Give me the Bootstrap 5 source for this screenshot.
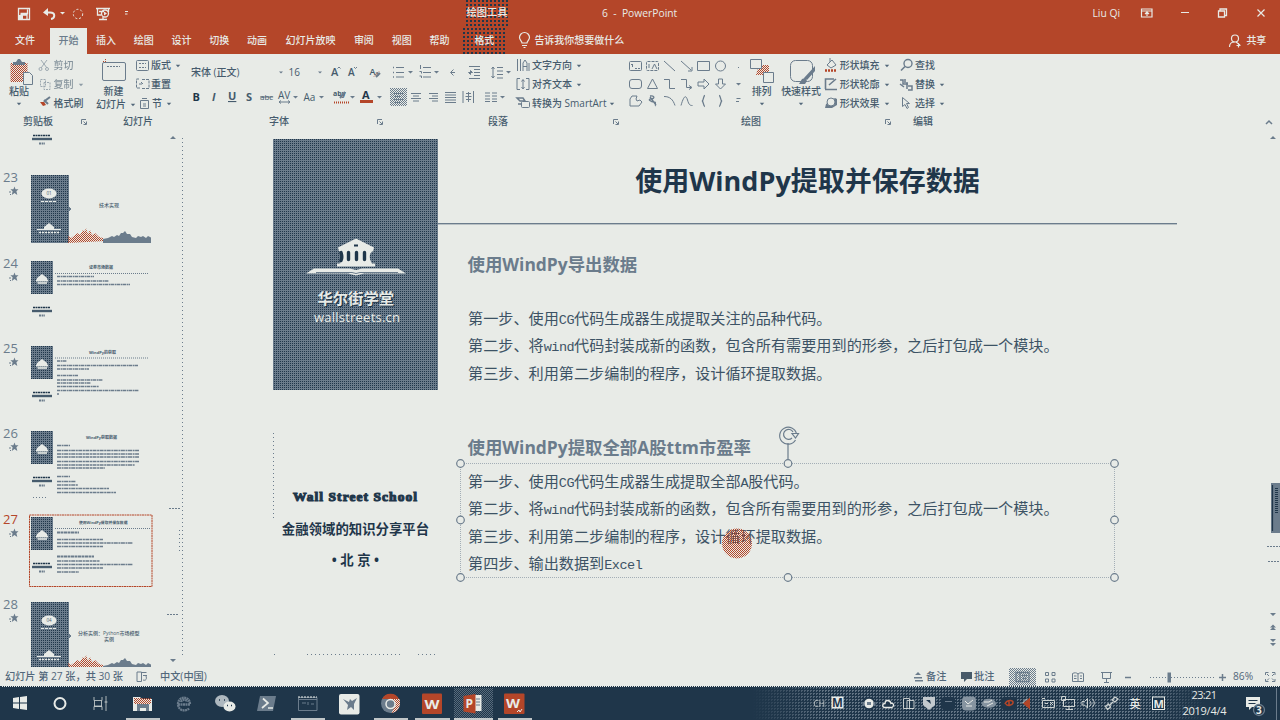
<!DOCTYPE html>
<html lang="zh-CN">
<head>
<meta charset="utf-8">
<meta name="viewport" content="width=device-width, initial-scale=1">
<title>6 - PowerPoint</title>
<link href="https://cdn.jsdelivr.net/npm/bootstrap@5.3.0/dist/css/bootstrap.min.css" rel="stylesheet">
<style>
:root{--paper:#e8ebe7;--slate:#6b7c8c;--navy:#1f364a;--brick:#b44629}
html,body{width:1280px;height:720px;overflow:hidden}
body{background:var(--paper);color:#465b6d;font:500 10px/13px "Open Sans","Noto Sans CJK SC",sans-serif}
svg{display:block;flex:none;overflow:visible;fill:none;stroke:var(--slate);stroke-width:1}
svg text{stroke:none;fill:#465b6d}
.f{fill:var(--slate);stroke:none}.fn{fill:var(--navy);stroke:none}.fr{fill:var(--brick);stroke:none}.fw{fill:var(--paper);stroke:none}
.sr{stroke:var(--brick)}.sw{stroke:var(--paper)}.sn{stroke:var(--navy)}
.hatch{background:conic-gradient(var(--navy) 25%,var(--slate) 0) 0 0/2px 2px}
.top-bar{background:var(--brick);color:var(--paper);height:54px}
.top-bar svg{stroke:var(--paper)}.top-bar svg text{fill:var(--paper)}
.line-a{height:27px;font-size:10.3px}.line-b{height:27px;padding-top:1px}
.lead-gap{width:324px}.user-name{width:388px;line-height:25px}
.doc-title{width:222px;padding-left:92px;line-height:25px;white-space:pre}
.ctx-tools{width:46px;background:conic-gradient(var(--navy) 25%,transparent 0) 0 0/4px 4px;white-space:nowrap}
.line-a .ctx-tools{line-height:25px}
.line-b>span{width:37.8px;text-align:center;line-height:25px;flex:none}
.line-b>.t-file{width:50px}.line-b>.t-on{width:37px;background:var(--paper);color:var(--slate)}
.line-b>.t-show{width:69px}.line-b>.t-fmt{width:46px;margin-left:3px}.line-b>.t-tell{width:92px}
.ribbon-x{height:77px}
.grp-body{height:58px}
.grp-foot{height:19px;line-height:19px;text-align:center}
.g1{width:92px}.g2{width:92px}.g3{width:202px}.g4{width:236px}.g5{width:274px}.g6{width:54px}
.foot1{width:76px}.foot3{width:190px}.foot4{width:224px}.foot5{width:258px}
.font-name{width:93px;padding-left:7px;line-height:24px}
.w-paste{width:38px}.w-new{width:43px}.w-arr{width:36px}
.rows3{padding-top:2px}
.rows3>div{height:19px;display:flex;align-items:center;white-space:nowrap}
.big-btn{text-align:center}
.faint{opacity:.6}
.shape-grid{display:grid;grid-template-columns:repeat(6,17.2px);grid-auto-rows:17.7px;padding:3px 0 0 4.5px}
.work{height:536px}
.thumbs{width:184px;overflow:hidden}
.num{width:31px;font-size:13px;line-height:15px;padding-left:3px;color:var(--slate)}
.num span{display:block;margin-top:-5px;height:16px}
.num svg{margin-left:6px}
.thumb-row{height:85.4px;flex:none}
.slide-left{width:165px;margin-left:89px;padding-top:8px}
.brand{height:251px}
.school{text-align:center;color:var(--navy);font-size:13.4px;font-weight:700;white-space:nowrap}
.school>div{height:31.6px;line-height:32px}
.school .wss{font-family:"Liberation Serif",serif;font-size:13.5px;-webkit-text-stroke:1.1px var(--navy);letter-spacing:1.05px}
.slide-right{width:739px;padding-top:8px}
.s-title{height:84px;line-height:84px;font-size:27px;font-weight:700;color:var(--navy);text-align:center}
.s-rule{height:1px;background:var(--slate);box-shadow:0 1px 0 #b9c1c4}
.s-h{padding-left:29.5px;font-size:17.4px;font-weight:700;color:var(--slate);white-space:nowrap}
.h-one{line-height:81px;height:79.8px}.h-two{padding-top:45px;height:77.2px;line-height:32px}
.s-text{padding-left:30px;font:400 15.15px/27.4px "Noto Sans CJK SC",sans-serif;color:#3d5365;white-space:nowrap}
.s-text i{font:400 13.5px/20px "Liberation Mono",monospace;letter-spacing:-.5px}
.boxed{margin-left:22px;padding:2.8px 0 0 7px;width:655px;height:115px;border:1px dotted #a3aeb6;position:relative}
.over{position:absolute;left:-8px;top:-38px;pointer-events:none}
.status-x{height:20px;border-bottom:1px dotted var(--navy);color:#52677a;font-size:10.2px}
.st-page{width:133px;padding-left:5px;white-space:nowrap}.st-lang{width:751px}.st-note{width:33px}.st-cmt{width:30px}.st-zoom{width:30px;padding-left:1px}
.task-x{height:33px;background:var(--navy);color:var(--paper)}
.task-x svg text{fill:var(--paper)}
.tray{width:528px;position:relative}
.tray:before{content:"";position:absolute;inset:0;background:conic-gradient(#627484 25%,transparent 0) 0 0/3px 3px;-webkit-mask-image:linear-gradient(90deg,transparent,#000 14%,#000 76%,transparent 86%)}
.tray>*{position:relative}
</style>
</head>
<body>
<svg width="0" height="0" class="position-absolute">
 <defs>
  <pattern id="pd" width="2" height="2" patternUnits="userSpaceOnUse"><rect width="2" height="2" fill="#6b7c8c" stroke="none"/><rect width="1" height="1" fill="#1f364a" stroke="none"/></pattern>
  <pattern id="pr" width="2" height="2" patternUnits="userSpaceOnUse"><rect width="1" height="1" fill="#b44629" stroke="none"/><rect x="1" y="1" width="1" height="1" fill="#b44629" stroke="none"/></pattern>
  <pattern id="ps" width="2" height="2" patternUnits="userSpaceOnUse"><rect width="1" height="1" fill="#6b7c8c" stroke="none"/><rect x="1" y="1" width="1" height="1" fill="#6b7c8c" stroke="none"/></pattern>
  <symbol id="car" viewBox="0 0 6 4"><path d="M.8 .8h4.4L3 3.2z" fill="#52677a" stroke="none"/></symbol>
  <symbol id="launch" viewBox="0 0 8 8"><path d="M1.5 6V1.5H6M3.5 3.5L6 6M3.5 6.5h3v-3" stroke="#6b7c8c"/></symbol>
  <symbol id="star" viewBox="0 0 10 10"><path d="M5.5 .5L6.5 3.3h3L7.4 5.2 8.3 9 5.5 7 2.8 9l.8-3.8L1.4 3.3h3z" fill="#6b7c8c" stroke="none"/><path d="M0 6h2M1 8.5h1" stroke="#6b7c8c"/></symbol>
  <symbol id="bank" viewBox="0 0 100 38"><path d="M50 0L68 9l-1 4h-1c-3 3-3 7 0 12h3v3H31v-3h3c3-5 3-9 0-12h-1l-1-4z" fill="#e8ebe7" stroke="none"/><path d="M35 14c1 3 1 6 0 8M42.500 14v7M50.500 14v7M58.500 14v7" stroke="#1f364a" stroke-width="3.400" stroke-linecap="round"/><path d="M48 7h4" stroke="#1f364a" stroke-width="2"/><path d="M8 30h36l6 1.600 6-1.600h36l8 5H58l-8 2-8-2H0z" fill="#e8ebe7" stroke="none"/><path d="M10 34h36l4 1 4-1h38" stroke="#6b7c8c"/></symbol>
  <symbol id="small" viewBox="0 0 22 33"><rect width="22" height="33" fill="url(#pd)" stroke="none"/><path d="M11 13l5 4v2H6v-2zM5 18.500h12v2H5z" fill="#e8ebe7" stroke="none"/><path d="M6.500 22h9.500" stroke="#e8ebe7" stroke-width="1.600"/></symbol>
  <symbol id="cover" viewBox="0 0 120 68"><rect width="38" height="68" fill="url(#pd)" stroke="none"/><path d="M38 32l2 2-2 2z" fill="#6b7c8c"/><ellipse cx="18" cy="18.500" rx="7.500" ry="5" fill="#e8ebe7" stroke="none"/><path d="M10 26.500h16" stroke="#e8ebe7" stroke-dasharray="3 1"/><path d="M18 48l5 4v2h7v1H6v-1h7v-2z" fill="#e8ebe7" stroke="none"/><path d="M8 57.500h20" stroke="#e8ebe7" stroke-width="1.600" stroke-dasharray="2 1"/><path d="M37 68v-7l3 2 4-3 2-2 3 2 3-5 2 1 1-3 2 6 2-4 2 5 3-2 4 4 4 1 3 3z" fill="url(#pr)" stroke="none"/><path d="M72 68v-4l5-1 2-1 2-1 2 1 3-2 2 1 2-3 2 0 2-2 2 3 3 0 2 3 4 1 2-2 3 1 2-1 3 2 2-2 4 2v5z" fill="#6b7c8c" stroke="none"/></symbol>
  <symbol id="motto" viewBox="0 0 22 14"><path d="M2 1.500h17" stroke="#1f364a" stroke-width="1.600" stroke-dasharray="2 .5"/><path d="M1 5h20" stroke="#465b6d" stroke-width="2.400"/><path d="M8 9.500h6" stroke="#6b7c8c" stroke-width="2" stroke-dasharray="2 .6"/></symbol>
 </defs>
</svg>

<header class="top-bar">
 <div class="line-a d-flex align-items-center">
  <svg width="140" height="27" viewBox="0 0 140 27">
   <path d="M18.500 8.500h11v11h-11zM20.500 13.500h7v-4M21 19v-4h6v4" stroke-width="1.300"/><path class="fw" d="M19 15h4v4h-4z"/>
   <path d="M45 12.500h5c6 0 5 6 1 6.500" stroke-width="2"/><path class="fw" d="M43 12.500l5-4.500v8z"/><path class="fw" d="M60 12h5l-2.500 2.500z"/>
   <circle cx="78" cy="14" r="4.700" stroke-dasharray="2 2"/>
   <path d="M96 8.500h14M97.500 9v6h4M108.500 9v3M103 17v2M99 19.500h8M99 11.500h5" stroke-width="1.300"/><circle cx="105" cy="13.500" r="3.500" stroke-width="1.300"/><path class="fw" d="M104 11.500l3 2-3 2z"/><path d="M125 11.500h3M125 14h2.500"/>
  </svg>
  <div class="lead-gap"></div>
  <div class="ctx-tools h-100 text-center">绘图工具</div>
  <div class="doc-title">6  -  PowerPoint</div>
  <div class="user-name text-end">Liu Qi</div>
  <svg width="160" height="27" viewBox="1120 0 160 27">
   <path d="M1141.500 9h10.500v8h-10.500zM1141.500 11h10.500M1147 16v-4M1145 14l2-2 2 2" stroke-width="1.200"/><path d="M1181 12.500h8"/><path d="M1218.500 11h6v6h-6zM1220 10.500V9h6.500v6.500H1225" stroke-width="1.300"/><path d="M1257.500 9.500l7 7M1264.500 9.500l-7 7" stroke-width="1.200"/>
  </svg>
 </div>
 <nav class="line-b d-flex">
  <span class="t-file">文件</span><span class="t-on">开始</span><span>插入</span><span>绘图</span><span>设计</span><span>切换</span><span>动画</span><span class="t-show">幻灯片放映</span><span>审阅</span><span>视图</span><span>帮助</span><span class="t-fmt ctx-tools">格式</span>
  <svg width="26" height="26" viewBox="507 27 26 26"><path d="M522 42c0-2-2.500-3-2.500-5.500a5 5 0 0 1 10 0c0 2.500-2.500 3.500-2.500 5.500zM522 44.500h5M523.500 46.500h2" stroke-width="1.200"/></svg>
  <span class="t-tell">告诉我你想要做什么</span>
  <svg width="617" height="26" viewBox="622 28 617 26"><circle cx="1232" cy="38.500" r="3.500" stroke-width="1.200"/><path d="M1226.500 47c0-3 2-5 5-5M1233 42l4 3M1235.500 43v4.500M1233.500 45.500h4" stroke-width="1.200"/></svg>
  <span class="text-start ps-1">共享</span>
 </nav>
</header>

<section class="ribbon-x d-flex">
 <div class="g1">
  <div class="grp-body d-flex">
   <div class="big-btn w-paste">
    <svg width="38" height="31" viewBox="0 54 38 31"><path d="M10.500 63h17v19h-17z" fill="url(#pr)" stroke="none"/><path class="f" d="M13 65v-3h3l2-3h2l2 3h3v3z"/><path d="M23.500 72.500h6l3 3v9h-9z" fill="#e8ebe7"/></svg>
    粘贴<svg class="mx-auto mt-1" width="6" height="4"><use href="#car"/></svg>
   </div>
   <div class="rows3">
    <div class="faint"><svg width="15.500" height="19" viewBox="38 56 15.500 19"><path d="M41 60l6 8M47 60l-6 8"/><circle cx="40.500" cy="69" r="1.500"/><circle cx="47" cy="69" r="1.500"/></svg>剪切</div>
    <div class="faint"><svg width="15.500" height="19" viewBox="38 75 15.500 19"><path d="M40.500 79.500h5v7h-5zM44 82.500h6v7h-6z" stroke-dasharray="2 1"/></svg>复制<svg class="ms-1" width="6" height="4"><use href="#car"/></svg></div>
    <div><svg width="15.500" height="19" viewBox="38 94 15.500 19"><path d="M44 102l2-2 4-3M44 100l4 4" stroke-width="2"/><path class="fr" d="M40 102h4l2 3-3 1z"/></svg>格式刷</div>
   </div>
  </div>
  <div class="grp-foot d-flex align-items-center"><div class="foot1">剪贴板</div><svg class="ms-1" width="8" height="8"><use href="#launch"/></svg></div>
 </div>

 <div class="g2">
  <div class="grp-body d-flex">
   <div class="big-btn w-new">
    <svg width="43" height="31" viewBox="92 54 43 31"><rect x="102.500" y="62.500" width="23" height="18" rx="1.500"/><path d="M107 66.500h13" stroke-dasharray="2 1"/><path class="sr" d="M103 61.500h3M105.500 59v2" stroke-dasharray="1 1"/></svg>
    <div>新建</div><div class="d-flex align-items-center ps-1 text-nowrap">幻灯片<svg class="ms-1" width="6" height="4"><use href="#car"/></svg></div>
   </div>
   <div class="rows3">
    <div><svg width="16" height="19" viewBox="135 56 16 19"><rect x="136.500" y="60.500" width="12" height="10" rx="1"/><path d="M139 63.500h7M139 67.500h7" stroke-dasharray="2 1"/></svg>版式<svg class="ms-1" width="6" height="4"><use href="#car"/></svg></div>
    <div><svg width="16" height="19" viewBox="135 75 16 19"><path d="M139 79h-2.500v9H140M142 79.500h7v9h-7M139 84h4l-2-2" stroke-dasharray="3 1"/></svg>重置</div>
    <div><svg width="17" height="19" viewBox="135 94 17 19"><path d="M140.500 100.500h8v8h-8zM142 98.500h5M143 104h3M143 106h3"/></svg>节<svg class="ms-1" width="6" height="4"><use href="#car"/></svg></div>
   </div>
  </div>
  <div class="grp-foot">幻灯片</div>
 </div>

 <div class="g3">
  <div class="grp-body">
   <div class="d-flex" style="padding-top:6px">
    <div class="font-name">宋体 (正文)</div>
    <svg width="109" height="24" viewBox="277 60 109 24"><path class="f" d="M279 71.500h4l-2 2zM318 71.500h4l-2 2z"/><text x="288.500" y="76">16</text><text x="331" y="76" font-size="11" font-weight="600">A</text><path d="M337.500 68.500l1.500-1.500 1.500 1.500"/><text x="348" y="76" font-size="10" font-weight="600">A</text><path d="M354 67l1.500 1.500L357 67"/><text x="369.500" y="75" font-size="9" font-weight="600">A</text><text x="375" y="76" font-size="7">a</text><path class="sr" d="M374 76.500l5-5" stroke-dasharray="1 1"/><path d="M376 77l4-4" stroke-width="2"/></svg>
   </div>
   <svg width="202" height="26" viewBox="184 84 202 26"><g font-weight="700" font-size="11"><text class="fn" x="192.500" y="101">B</text><text x="212" y="101" font-style="italic">I</text><text x="228" y="100" text-decoration="underline">U</text><text x="246" y="101">S</text></g><text x="260" y="100" font-size="8" text-decoration="line-through">abc</text><text x="278" y="99" font-size="10">AV</text><path d="M279 102h11M281 100.500l-2 1.500 2 1.500M288 100.500l2 1.500-2 1.500"/><path class="f" d="M293 96h5l-2.500 2.500zM319 96h5l-2.500 2.500zM350 96h5l-2.500 2.500zM377 96h5l-2.500 2.500z"/><text x="303.500" y="101" font-size="10">Aa</text><text x="333" y="96" font-size="7" font-weight="700">aby</text><path d="M340 98l5-6" stroke-width="2"/><path class="sr" d="M334 102.500h15" stroke-width="2" stroke-dasharray="1 1"/><text class="fn" x="362" y="99" font-size="11" font-weight="700">A</text><rect class="fr" x="360" y="100" width="13" height="3"/></svg>
  </div>
  <div class="grp-foot d-flex align-items-center"><div class="foot3">字体</div><svg class="ms-0" width="12" height="8"><use href="#launch" x="2" width="8"/></svg></div>
 </div>

 <div class="g4">
  <div class="grp-body d-flex">
   <div>
    <svg width="129" height="31" viewBox="386 54 129 31"><path d="M396 67.500h8M396 72.500h8M396 77h8"/><path d="M393 67.500h1M393 72.500h1M393 77h1" stroke-width="1.500"/><path class="f" d="M408 71h5l-2.500 2.500zM434 71h5l-2.500 2.500zM506 71h5l-2.500 2.500z"/><path d="M423 67.500h8M423 72.500h8M423 77h8"/><path d="M420.500 65v4M419.500 71.500h2v2M419.500 76h2v2"/><path d="M455 72.500h-4M453.500 69.500l-3 3 3 3"/><path d="M469 66.500h11M474 69.500h6M474 72.500h6M474 75.500h6M469 78.500h11M468.500 72.500h4l-2-2v4z"/><path d="M497 67.500h6M497 71h6M497 74.500h6M497 78h6M493 67v11M491.500 69l1.500-2 1.500 2M491.500 76l1.500 2 1.500-2"/></svg>
    <svg width="129" height="27" viewBox="386 85 129 27"><rect x="390" y="88" width="17" height="18" fill="url(#ps)" stroke="none"/><path d="M394 93.500h9M394 96.500h6M394 99.500h9M394 102.500h6"/><path d="M411 93.500h10M413 96h6M411 98.500h10M413 101h6M429 93.500h9M432 96h6M429 98.500h9M432 101h6M445 92.500h11M445 95h11M445 97.500h11M445 100h11M445 102.500h11M463 91v12M473.500 91v12M466 93.500h5M465.500 96.500h6M466 99.500h5M468.500 92v10M485 93h5M492 93h5M485 96h5M492 96h5M485 99h5M492 99h5M485 101.500h5M492 101.500h5"/><path class="f" d="M500 96h5l-2.500 2.500z"/></svg>
   </div>
   <div class="rows3">
    <div><svg width="17" height="19" viewBox="515 56 17 19"><path d="M517.500 59v12M520.500 59v12M523 71v-8l2-3 2 3v8M523 66.500h4M529 63v8"/></svg>文字方向<svg class="ms-1" width="6" height="4"><use href="#car"/></svg></div>
    <div><svg width="17" height="19" viewBox="515 75 17 19"><path d="M520 78.500h-3v11h3M526 78.500h3v11h-3M523 80v8M521.500 81.500l1.500-2 1.500 2M521.500 87l1.500 2 1.500-2"/></svg>对齐文本<svg class="ms-1" width="6" height="4"><use href="#car"/></svg></div>
    <div><svg width="17" height="19" viewBox="515 94 17 19"><path d="M517 98h6l2 3h-5zM518 104h4" stroke-width="1.500"/><rect x="521.500" y="101.500" width="8" height="6" rx="1" fill="#e8ebe7"/></svg>转换为 SmartArt<svg class="ms-0" width="8" height="4"><use href="#car" x="2" width="6"/></svg></div>
   </div>
  </div>
  <div class="grp-foot d-flex align-items-center"><div class="foot4">段落</div><svg width="12" height="8"><use href="#launch" x="2" width="8"/></svg></div>
 </div>

 <div class="g5">
  <div class="grp-body d-flex">
   <div class="shape-grid">
    <svg width="17" height="18"><rect x="2.500" y="4.500" width="12" height="9" rx="1"/><path d="M4 7.500h3M5.500 8v3M8 11.500h5" stroke-dasharray="2 1"/></svg>
    <svg width="17" height="18"><rect x="2.500" y="4.500" width="12" height="9" rx="1" stroke-dasharray="3 1"/><path d="M8 12l2.500-5 2.500 5M5 7v4"/></svg>
    <svg width="17" height="18"><path d="M3 4l11 10"/></svg><svg width="17" height="18"><path d="M3 4l10 9M10 14h4v-4"/></svg>
    <svg width="17" height="18"><path d="M2.500 4.500h12v9h-12z"/></svg><svg width="17" height="18"><circle cx="8.500" cy="9" r="5"/></svg>
    <svg width="17" height="18"><rect x="2.500" y="4.500" width="12" height="9" rx="2.500"/></svg><svg width="17" height="18"><path d="M8.500 4l5 9.500h-10z"/></svg>
    <svg width="17" height="18"><path d="M3 4.500h5.500v9H14"/></svg><svg width="17" height="18"><path d="M3 4.500h5.500v8H13M11 10.500l3 2-3 2"/></svg>
    <svg width="17" height="18"><path d="M3 7h6V4l5 5-5 5v-3H3z"/></svg><svg width="17" height="18"><path d="M6.500 4h4v5h3l-5 5-5-5h3z"/></svg>
    <svg width="17" height="18"><path d="M8 4h-3l-2 3v7h9l3-4-2-2-3 1-1-2 1-3z"/></svg><svg width="17" height="18"><path d="M6 4c5-1 5 3 1 3s0 3 3 3 0 3 2 4M6 5l6 8" stroke-width="1.300"/></svg>
    <svg width="17" height="18"><path d="M3 4.500c6 0 9 3 11 9"/></svg><svg width="17" height="18"><path d="M3 13.500C6 3 8 3 9.500 8s2.500 5.500 5 5.500"/></svg>
    <svg width="17" height="18"><path d="M10 3.500c-2 0-1 5-3 5.500 2 .5 1 5.500 3 5.500" stroke-width="1.300"/></svg><svg width="17" height="18"><path d="M7 3.500c2 0 1 5 3 5.500-2 .5-1 5.500-3 5.500" stroke-width="1.300"/></svg>
   </div>
   <svg width="14" height="58" viewBox="730 54 14 58"><path class="f" d="M736 83h5l-2.500 2.500zM738 67h1v1h-1z"/><path d="M736.500 98.500h4M736 101.500h3"/></svg>
   <div class="big-btn w-arr">
    <svg width="36" height="31" viewBox="744 54 36 31"><path d="M759 65h10v10h-13z" fill="url(#pr)" stroke="none"/><path d="M750.500 59.500h11v9h-11zM763.500 72.500h10v10h-10z" fill="#e8ebe7"/></svg>
    排列<svg class="mx-auto mt-1" width="6" height="4"><use href="#car"/></svg>
   </div>
   <div class="big-btn w-new">
    <svg width="43" height="31" viewBox="779 54 43 31"><rect x="789.500" y="60.500" width="22" height="21" rx="5"/><path class="f" d="M814 66v5l-8 9-3-2zM798 84l3-5 3-1 2 3-2 3z" stroke="#e8ebe7" stroke-width=".7"/></svg>
    快速样式<svg class="mx-auto mt-1" width="6" height="4"><use href="#car"/></svg>
   </div>
   <div class="rows3">
    <div><svg width="17" height="19" viewBox="823 56 17 19"><path d="M827 65l5-5 4 5-5 3zM830 62v-4"/><path class="sr" d="M825 70.500h12" stroke-width="2.500" stroke-dasharray="2 1"/></svg>形状填充<svg class="ms-1" width="6" height="4"><use href="#car"/></svg></div>
    <div><svg width="17" height="19" viewBox="823 75 17 19"><path d="M825.500 89v-10H834M829 85l7-6M825 89.500h12" stroke-width="1.600"/></svg>形状轮廓<svg class="ms-1" width="6" height="4"><use href="#car"/></svg></div>
    <div><svg width="17" height="19" viewBox="823 94 17 19"><path class="f" d="M826 104l-1 4h7l5-3v-6l-2-1z"/><circle cx="831" cy="102" r="4" fill="#e8ebe7"/></svg>形状效果<svg class="ms-1" width="6" height="4"><use href="#car"/></svg></div>
   </div>
  </div>
  <div class="grp-foot d-flex align-items-center"><div class="foot5">绘图</div><svg class="ms-1" width="8" height="8"><use href="#launch"/></svg></div>
 </div>

 <div class="g6">
  <div class="grp-body rows3">
   <div><svg width="19" height="19" viewBox="896 56 19 19"><circle cx="908" cy="63.500" r="4" stroke-width="1.400"/><path d="M905 66.500l-4 4" stroke-width="1.600"/></svg>查找</div>
   <div><svg width="19" height="19" viewBox="896 75 19 19"><path d="M900 80h3v4h5M900 84l4 3M905 79v4M908 86h4v4h-4M907 82v7" stroke-width="1.500"/></svg>替换<svg class="ms-1" width="6" height="4"><use href="#car"/></svg></div>
   <div><svg width="19" height="19" viewBox="896 94 19 19"><path d="M902.500 97.500v9l2.500-2 2 4 1.500-1-2-4h3z"/></svg>选择<svg class="ms-1" width="6" height="4"><use href="#car"/></svg></div>
  </div>
  <div class="grp-foot">编辑</div>
 </div>
 <svg class="ms-auto mt-auto" width="20" height="20" viewBox="1260 111 20 20"><path d="M1266 124l3-3 3 3" stroke-width="1.500"/></svg>
</section>

<main class="work d-flex">
 <aside class="thumbs d-flex">
  <div>
   <div class="d-flex" style="height:44.300px"><div class="num"></div><svg width="120" height="44"><use href="#motto" x="0" y="3" width="22" height="14"/></svg></div>
   <div class="thumb-row d-flex"><div class="num"><span>23</span><svg width="10" height="10"><use href="#star"/></svg></div>
    <svg width="120" height="68"><use href="#cover" width="120" height="68"/><text x="15.500" y="20" font-size="4.500">01</text><text x="68" y="32" font-size="5">技术实现</text></svg></div>
   <div class="thumb-row d-flex"><div class="num"><span>24</span><svg width="10" height="10"><use href="#star"/></svg></div>
    <svg width="120" height="68"><use href="#small" width="22" height="33"/><use href="#motto" x="0" y="45" width="22" height="14"/><text x="58" y="7.500" font-size="4" font-weight="700">证券市场数据</text><path d="M24 12.500h94" stroke-dasharray="1 1"/><path d="M26 15.500h37M26 20h52M26 23.500h73" stroke-width="1.400" stroke-dasharray="3 .6 2 .4"/></svg></div>
   <div class="thumb-row d-flex"><div class="num"><span>25</span><svg width="10" height="10"><use href="#star"/></svg></div>
    <svg width="120" height="68"><use href="#small" width="22" height="33"/><use href="#motto" x="0" y="45" width="22" height="14"/><text x="58" y="7.500" font-size="4" font-weight="700">WindPy的获取</text><path d="M24 12h94" stroke-dasharray="1 1"/><path d="M26 15h10M26 19.500h81M26 23h32M26 29.500h21M26 34h46M26 37h34M26 40.500h42M26 44.500h82M26 48h2" stroke-width="1.300" stroke-dasharray="3 .6 2 .4"/></svg></div>
   <div class="thumb-row d-flex"><div class="num"><span>26</span><svg width="10" height="10"><use href="#star"/></svg></div>
    <svg width="120" height="68"><use href="#small" width="22" height="33"/><use href="#motto" x="0" y="45" width="22" height="14"/><text x="55" y="7.500" font-size="4" font-weight="700">WindPy获取数据</text><path d="M26 14.500h13M26 19.500h82M26 23h82M26 26h82M26 30.500h82M26 34h78M26 37h48M26 45.500h13M26 50.500h19M26 54h21M26 57.500h52M26 61.500h59" stroke-width="1.300" stroke-dasharray="4 .6 2 .5"/><path d="M2 66.500h14" stroke-dasharray="1 2"/></svg></div>
   <div class="thumb-row d-flex"><div class="num"><span style="color:#b44629">27</span><svg width="10" height="10"><use href="#star"/></svg></div>
    <svg width="120" height="68"><rect class="sr" x="-1.500" y="-2" width="122.500" height="71.500" stroke-dasharray="2 .5"/><use href="#small" width="22" height="33"/><use href="#motto" x="0" y="45" width="22" height="14"/><text x="48" y="6.500" font-size="3.800" font-weight="700">使用WindPy提取并保存数据</text><path d="M24 11.500h95" stroke-dasharray="1 1"/><path d="M26 15.500h22M26 39.500h37" stroke-width="1.800" stroke-dasharray="3 .5"/><path d="M26 22.500h46M26 26h76M26 29.500h46M26 44h43M26 47.500h76M26 51h46M26 55h22" stroke-width="1.300" stroke-dasharray="4 .6 2 .5"/></svg></div>
   <div class="thumb-row d-flex"><div class="num"><span>28</span><svg width="10" height="10"><use href="#star"/></svg></div>
    <svg width="120" height="68"><use href="#cover" width="120" height="68"/><text x="15.500" y="20" font-size="4.500">04</text><text x="47" y="33" font-size="5">分析实例：Python市场模型</text><text x="73" y="39" font-size="5">实例</text></svg></div>
  </div>
  <svg width="33" height="536" viewBox="151 131 33 536"><path class="f" d="M170 139h6l-3-3zM170 659h6l-3 3z"/><path d="M182.500 138v520" stroke-dasharray="1 3"/><path d="M169 508.500h11M167 614.500h12" stroke-dasharray="2 1"/><path d="M179.500 530v22" stroke-dasharray="1 3"/></svg>
 </aside>

 <div class="slide-left">
  <div class="brand hatch"><svg width="165" height="251" viewBox="273 139 165 251"><use href="#bank" x="306" y="238.500" width="100" height="38"/><g font-weight="700" font-size="15.300"><text x="318.700" y="304.500" style="fill:#1f364a">华尔街学堂</text><text x="317.500" y="303.500" style="fill:#e8ebe7">华尔街学堂</text></g><text x="314" y="322" font-size="13" textLength="86" style="fill:#e8ebe7">wallstreets.cn</text></svg></div>
  <svg width="165" height="91" viewBox="273 390 165 91"><path d="M273.500 433v88" stroke-dasharray="1 3"/></svg>
  <div class="school"><div class="wss">Wall Street School</div><div>金融领域的知识分享平台</div><div>• 北 京 •</div></div>
  <svg width="165" height="80" viewBox="273 576 165 80"><path d="M274 654.500h3M307 654.500h94M418 654.500h20" stroke-dasharray="1 3"/></svg>
 </div>
 <div class="slide-right">
  <div class="s-title">使用WindPy提取并保存数据</div>
  <div class="s-rule"></div>
  <div class="s-h h-one">使用WindPy导出数据</div>
  <div class="s-text">
   <div>第一步、使用<i>CG</i>代码生成器生成提取关注的品种代码。</div>
   <div>第二步、将<i>wind</i>代码封装成新的函数，包含所有需要用到的形参，之后打包成一个模块。</div>
   <div>第三步、利用第二步编制的程序，设计循环提取数据。</div>
  </div>
  <div class="s-h h-two">使用WindPy提取全部A股ttm市盈率</div>
  <div class="s-text boxed">
   <div>第一步、使用<i>CG</i>代码生成器生成提取全部<i>A</i>股代码。</div>
   <div>第二步、将<i>wind</i>代码封装成新的函数，包含所有需要用到的形参，之后打包成一个模块。</div>
   <div>第三步、利用第二步编制的程序，设计循环提取数据。</div>
   <div>第四步、输出数据到<i>Excel</i></div>
   <svg class="over" width="670" height="160" viewBox="453 426 670 160"><g fill="#e8ebe7" stroke-width="1.200"><path d="M788 443v16"/><circle cx="460.500" cy="463.500" r="3.800"/><circle cx="788" cy="463.500" r="3.800"/><circle cx="1114.500" cy="463.500" r="3.800"/><circle cx="460.500" cy="520" r="3.800"/><circle cx="1114.500" cy="520" r="3.800"/><circle cx="460.500" cy="577.500" r="3.800"/><circle cx="788" cy="577.500" r="3.800"/><circle cx="1114.500" cy="577.500" r="3.800"/><path d="M796.500 434a8.500 8.500 0 1 0-1 6" fill="none"/><path d="M792 433.500h6.500l-3 4.500z"/><path d="M793 432a5 5 0 1 0-1 6" fill="none"/></g><circle cx="737" cy="543.500" r="15" fill="url(#pr)" stroke="none"/></svg>
  </div>
 </div>
 <svg class="ms-auto" width="20" height="536" viewBox="1260 131 20 536"><path class="f" d="M1270 139h6l-3-3zM1270 613h6l-3 3zM1270 630h6l-3-3zM1270 627.500h6l-3-3zM1270 639h6l-3 3zM1270 643h6l-3 3z"/><rect class="f" x="1271" y="483" width="9" height="50"/><path class="sn" d="M1272.500 485v46" stroke-width="1.200"/><path class="sn" d="M1276.500 488v26" stroke-width="3" stroke-dasharray="1 1"/><path d="M1267 546.500h13M1268 561.500h12" stroke-dasharray="2 1"/></svg>
</main>

<footer class="status-x d-flex align-items-center">
 <div class="st-page">幻灯片 第 27 张，共 30 张</div>
 <svg width="27" height="19" viewBox="133 667 27 19"><path d="M141.500 672v9.500h-4.500v-9.500zM141.500 672.500h5M143 680c3 1 4-1 3-4M143 675.500h4"/></svg>
 <div class="st-lang">中文(中国)</div>
 <svg width="15" height="19" viewBox="911 667 15 19"><path class="f" d="M918 672l3 3h-6zM914 677h8v1.500h-8zM915 680h8v1.500h-8z"/></svg>
 <div class="st-note">备注</div>
 <svg width="15" height="19" viewBox="959 667 15 19"><path class="fn" d="M961 672h11v7h-5l-3 3v-3h-3z" opacity=".8"/></svg>
 <div class="st-cmt">批注</div>
 <svg width="228" height="19" viewBox="1004 667 228 19"><rect x="1009" y="668" width="27" height="18" fill="url(#ps)" stroke="none"/><path d="M1016 672.500h13v9h-13zM1020 672v9M1022 675.500h5M1022 678.500h5" stroke-width="1.300"/><path d="M1045.500 672.500h3v3h-3zM1052 672.500h3v3h-3zM1045.500 679h3v3h-3zM1052 679h3v3h-3zM1072.500 673.500c2-1 4-1 5.500.5 1.500-1.500 4-1.500 5.500-.5v8h-11zM1078 674v7M1074 676h2.500M1080 676h2M1074 678.500h2.500M1080 678.500h2M1101 672.500h11M1102.500 673v5.500h8V673M1106.500 679v3M1104 682.500h5"/><path d="M1125 677.500h6M1219 677.500h7M1222.500 674v7" stroke-width="1.500"/><path d="M1150 677.500h66" stroke-dasharray="1 2"/><rect class="f" x="1167.500" y="672.500" width="3.500" height="10"/></svg>
 <div class="st-zoom">86%</div>
 <svg width="18" height="19" viewBox="1262 667 18 19"><path d="M1265.500 675v-2.500h3M1272 672.500h3v2.500M1275 679v2.500h-3M1268.500 681.500h-3V679M1269 676l-2-2M1272 676l2-2M1269 678.500l-2 2M1272 678.500l2 2"/></svg>
</footer>

<footer class="task-x d-flex">
 <svg width="752" height="33" viewBox="0 687 752 33">
  <path class="fw" d="M13 698l6-1v5.500h-6zM20 697l7-1v6.500h-7zM13 703.500h6v5.500l-6-1zM20 703.500h7v6.500l-7-1z"/>
  <circle class="sw" cx="60" cy="703.500" r="5.500" stroke-width="2"/>
  <path class="sw" d="M94 697v3.500h8V697M94 710v-3.500h8v3.500M94.500 701v5h7v-5M106 696v15M104.500 702h3" opacity=".7"/>
  <path class="fw" d="M133 697h7l2 2h10v12h-19z"/><path d="M134 698h17v6h-17z" fill="url(#pr)" stroke="none"/><path class="f" d="M137 704h12v7h-3v-3h-6v3h-3z"/>
  <path d="M178 704.500h12c0-9-11-9-12-1 0 8 8 8 11 5M181 702c1-3 6-3 6 0" stroke-width="2.300" stroke-dasharray="2 .5"/>
  <ellipse cx="222" cy="701" rx="7" ry="6" fill="#aeb8bf" stroke="none"/><ellipse class="fw" cx="229.500" cy="706.500" rx="6" ry="5"/><path class="sn" d="M219 700h1M224 700h1M227 705.500h1M231 705.500h1" stroke-width="1.500"/>
  <path class="f" d="M260 696h16l-3 15h-16z"/><path class="sw" d="M263 698.500l5 4.500-6 5M268 708h5" stroke-width="1.700"/>
  <path d="M298.500 697.500h18.500v13h-18.500zM298.500 699.500h18.500M302 703h4M308 702v3M311 704h3"/><path class="sw" d="M298 697h19" stroke-dasharray="2 1"/>
  <rect class="fw" x="339" y="694" width="20.500" height="20.500" rx="2"/><path class="f" d="M343 699l6 3 1-3 2 2 5-3-3 6v6l-3-3-4 3 1-5z"/>
  <circle cx="390.500" cy="703.500" r="9.500" class="f"/><path d="M382 699a9.500 9.500 0 0 1 17 0z" class="fr"/><path d="M391 699h8.500c2 7-2 13-8 14l4-8z" fill="#e8ebe7" stroke="none"/><path d="M391 699h8.500c2 7-2 13-8 14l4-8z" fill="url(#pr)" stroke="none"/><circle class="f" cx="390.500" cy="704" r="4.500" stroke-width="1.500" style="stroke:#e8ebe7"/>
  <rect class="fr" x="422" y="693.500" width="20" height="20.500" rx="1"/><text x="424.500" y="708.500" font-size="13" font-weight="700" textLength="15" lengthAdjust="spacingAndGlyphs">W</text>
  <rect x="454" y="688" width="39" height="32" fill="url(#ps)" stroke="none" opacity=".75"/><path class="fw" d="M474 695h7.500v16H474z"/><path d="M476 699h4M476 702h4M476 705h4"/><path class="fr" d="M463.500 696l12-2v19.500l-12-2z"/><text x="465.500" y="708" font-size="12" font-weight="700">P</text>
  <rect class="fr" x="504" y="693.500" width="20.500" height="20.500" rx="1"/><text x="506" y="708" font-size="13" font-weight="700" textLength="14" lengthAdjust="spacingAndGlyphs">W</text><path class="sw" d="M517 712l2-2 1 2 2-3"/>
  <path class="sw" d="M126 719h34M291 719h34M374 719h34M415 719h35M454 719h39M498 719h34" stroke-width="2" opacity=".8"/>
 </svg>
 <div class="tray">
  <svg width="528" height="33" viewBox="752 687 528 33">
   <text x="813.500" y="706.500" font-size="8.500" opacity=".75">CH</text>
   <rect class="fw" x="831.500" y="696.500" width="12" height="12"/><text x="832" y="707" font-size="11.500" font-weight="700" style="fill:#1f364a">M</text>
   <circle class="fn" cx="869" cy="703.500" r="6.500"/><circle class="fw" cx="869" cy="703.500" r="4.800"/><path class="f" d="M867 702h4v3h-4zM862.500 702h2v4h-2zM873.500 702h2v4h-2z"/>
   <path class="sw" d="M885 707.500h7c3-2 1-5-1-4-1-4-6-4-6 0-3 0-3 4 0 4z" stroke-width="1.300" fill="#1f364a"/>
   <path class="sw" d="M903.500 698.500h6v10h-6zM907 700.500h7v8h-7z" fill="#1f364a" opacity=".8"/>
   <path d="M923 697h12v8l-6 5-6-5z" fill="#c3cace" stroke="none"/><path class="fn" d="M926 700h4l1 4z"/>
   <rect class="fn" x="942" y="697" width="13" height="13" rx="2"/><path d="M945 701.500h7"/>
   <rect x="962" y="696.500" width="14" height="14" rx="4" fill="#8694a0" stroke="none"/><path class="sw" d="M965 701l3 3 5-4M966 706h6"/>
   <path d="M982 704c0-7 14-7 14 0 0 5-14 5-14 0z" fill="#8694a0" stroke="none"/><path class="sw" d="M984 702h5l3-2M987 706l6-3"/>
   <rect class="fn" x="1002" y="697" width="14" height="13" rx="2"/><path class="sr" d="M1005 704c2-5 9-4 8-1s-6 3-7 1M1009 700v5" stroke-width="1.600"/>
   <path class="fr" d="M1023 703.500l7-6v12z"/><path class="sw" d="M1022 703.500l5-5"/>
   <g class="sw" opacity=".85"><path d="M1042.500 700.500h12v7h-12zM1045 703.500h3M1050 702l3 3M1053 702l-3 3M1042 698.500h3"/><path d="M1063.500 699.500h11v7h-11zM1066 709.500h7M1069 707v2M1061.500 696.500h4v4h-4z"/><path d="M1082 701.500h2.500l3-3v9.500l-3-3H1082zM1089.500 700.500c2 2 2 4 0 6M1092 698.500c3 3 3 6 0 9"/><path d="M1105.500 706.500l3-2.500 2 3-3 2.500zM1110 705l3-3M1112 700l3-3 3 2-3 3z" stroke-width="1.300"/></g>
   <text x="1129.500" y="707.500" font-size="11">英</text>
   <rect class="fn" x="1152.500" y="697" width="12" height="12.500" style="stroke:#e8ebe7"/><text x="1153.500" y="707.500" font-size="11" font-weight="700">M</text>
   <text x="1191.500" y="699" font-size="11" textLength="25.500">23:21</text><text x="1182.500" y="714.500" font-size="11" textLength="44">2019/4/4</text>
   <path class="fw" d="M1246 697h14v10h-8l-3 3v-3h-3z"/><path class="sn" d="M1248.500 700.500h9M1248.500 703.500h7"/><circle class="fn" cx="1259" cy="710" r="5.500" stroke-width="1.300" style="stroke:#6b7c8c"/><text x="1256" y="714" font-size="10" font-weight="700">3</text>
   <path d="M1276.500 688v32"/>
  </svg>
 </div>
</footer>
<script src="https://cdn.jsdelivr.net/npm/bootstrap@5.3.0/dist/js/bootstrap.bundle.min.js"></script>
</body>
</html>
